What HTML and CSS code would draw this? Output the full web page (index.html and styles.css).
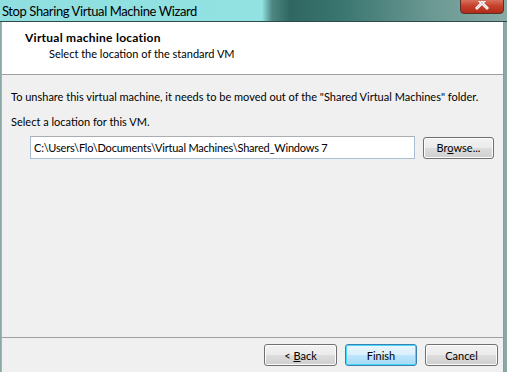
FILE: index.html
```html
<!DOCTYPE html>
<html lang="en">
<head>
    <meta charset="UTF-8">
    <title>Stop Sharing Virtual Machine Wizard</title>
    <link rel="stylesheet" href="styles.css">
</head>
<body>
    <div class="window">
        <div class="titlebar">
            <span class="title">Stop Sharing Virtual Machine Wizard</span>
            <span class="close">
                <svg width="14" height="10" viewBox="0 0 14 10"><path d="M2 -3 L12 7 M12 -3 L2 7" stroke="#fff" stroke-width="3" stroke-linecap="square"/><path d="M2 -3 L12 7 M12 -3 L2 7" stroke="#8a5a60" stroke-width="0.6" fill="none" opacity="0.5"/></svg>
            </span>
        </div>
        <div class="frame">
            <div class="header">
                <div class="header-title">Virtual machine location</div>
                <div class="header-sub">Select the location of the standard VM</div>
            </div>
            <div class="content">
                <p class="intro">To unshare this virtual machine, it needs to be moved out of the "Shared Virtual Machines" folder.</p>
                <p class="label">Select a location for this VM.</p>
                <div class="path-row">
                    <input class="path" type="text" value="C:\Users\Flo\Documents\Virtual Machines\Shared_Windows 7">
                    <button class="btn browse">Br<u>o</u>wse...</button>
                </div>
            </div>
            <div class="footer">
                <button class="btn">&lt; <u>B</u>ack</button>
                <button class="btn default">Finish</button>
                <button class="btn">Cancel</button>
            </div>
        </div>
    </div>
</body>
</html>
```

FILE: styles.css
```css
* { margin: 0; padding: 0; box-sizing: border-box; }
body {
    width: 507px;
    height: 372px;
    overflow: hidden;
    font-family: Lato, "Open Sans", sans-serif;
    font-size: 11px;
    color: #000;
    background: #8aa9a6;
}
.window { width: 507px; height: 372px; display: flex; flex-direction: column; }

.titlebar {
    height: 22px;
    flex: none;
    position: relative;
    display: flex;
    align-items: center;
    padding-left: 2px;
    border-bottom: 1px solid #2e4a48;
    background:
        linear-gradient(90deg, #8fdfe0 0, #92e2e2 262px, #4d8782 272px, #2f6662 290px, #3a7570 340px, #6a9892 430px, #88aba6 507px);
}
.title {
    font-size: 13px;
    letter-spacing: -0.4px;
    color: #000;
    line-height: 20px;
}
.close {
    position: absolute;
    right: 3px;
    top: -4px;
    width: 44px;
    height: 18px;
    border: 1px solid #5a3028;
    border-radius: 0 0 4px 4px;
    background: linear-gradient(#e08a76, #c7412b 55%, #b02c18);
    display: flex;
    justify-content: center;
    align-items: flex-start;
    padding-top: 4px;
}

.frame {
    flex: 1;
    display: flex;
    flex-direction: column;
    margin: 0 3px 0 1px;
    border-left: 1px solid #9fb4b3;
    border-right: 1px solid #8c9c9b;
    background: #f0f0f0;
}
.header {
    height: 53px;
    background: #fff;
    border-bottom: 1px solid #a0a0a0;
    padding: 8px 0 0 23px;
}
.header-title { font-size: 12px; font-weight: bold; letter-spacing: 0.25px; line-height: 16px; }
.header-sub { padding-left: 24px; line-height: 16px; }

.content { flex: 1; padding: 14px 0 0 9px; }
.intro { line-height: 16px; white-space: nowrap; }
.label { margin-top: 9px; line-height: 16px; }
.path-row { display: flex; align-items: center; margin-top: 6px; padding-left: 19px; }
.path {
    width: 385px;
    height: 23px;
    border: 1px solid #a9bdd3;
    border-top-color: #abadb3;
    padding: 0 3px;
    font: inherit;
    letter-spacing: -0.2px;
    color: #000;
    background: #fff;
    outline: none;
}
.btn {
    width: 73px;
    height: 22px;
    font: inherit;
    color: #000;
    border: 1px solid #707070;
    border-radius: 3px;
    background: linear-gradient(#f2f2f2 0, #ebebeb 50%, #dddddd 51%, #cfcfcf 100%);
    box-shadow: inset 0 0 0 1px #fcfcfc;
}
.btn u { text-decoration: underline; }
.browse { width: 71px; margin-left: 8px; }

.footer {
    height: 35px;
    flex: none;
    border-top: 1px solid #a0a0a0;
    display: flex;
    justify-content: flex-end;
    align-items: center;
    gap: 8px;
    padding: 0 5px 0 0;
}
.btn.default {
    width: 72px;
    border-color: #3c7fb1;
    background: linear-gradient(#eaf6fd 0, #d9f0fc 50%, #bee6fd 51%, #a7d9f5 100%);
    box-shadow: inset 0 0 0 1px #48d8fb;
}
```
